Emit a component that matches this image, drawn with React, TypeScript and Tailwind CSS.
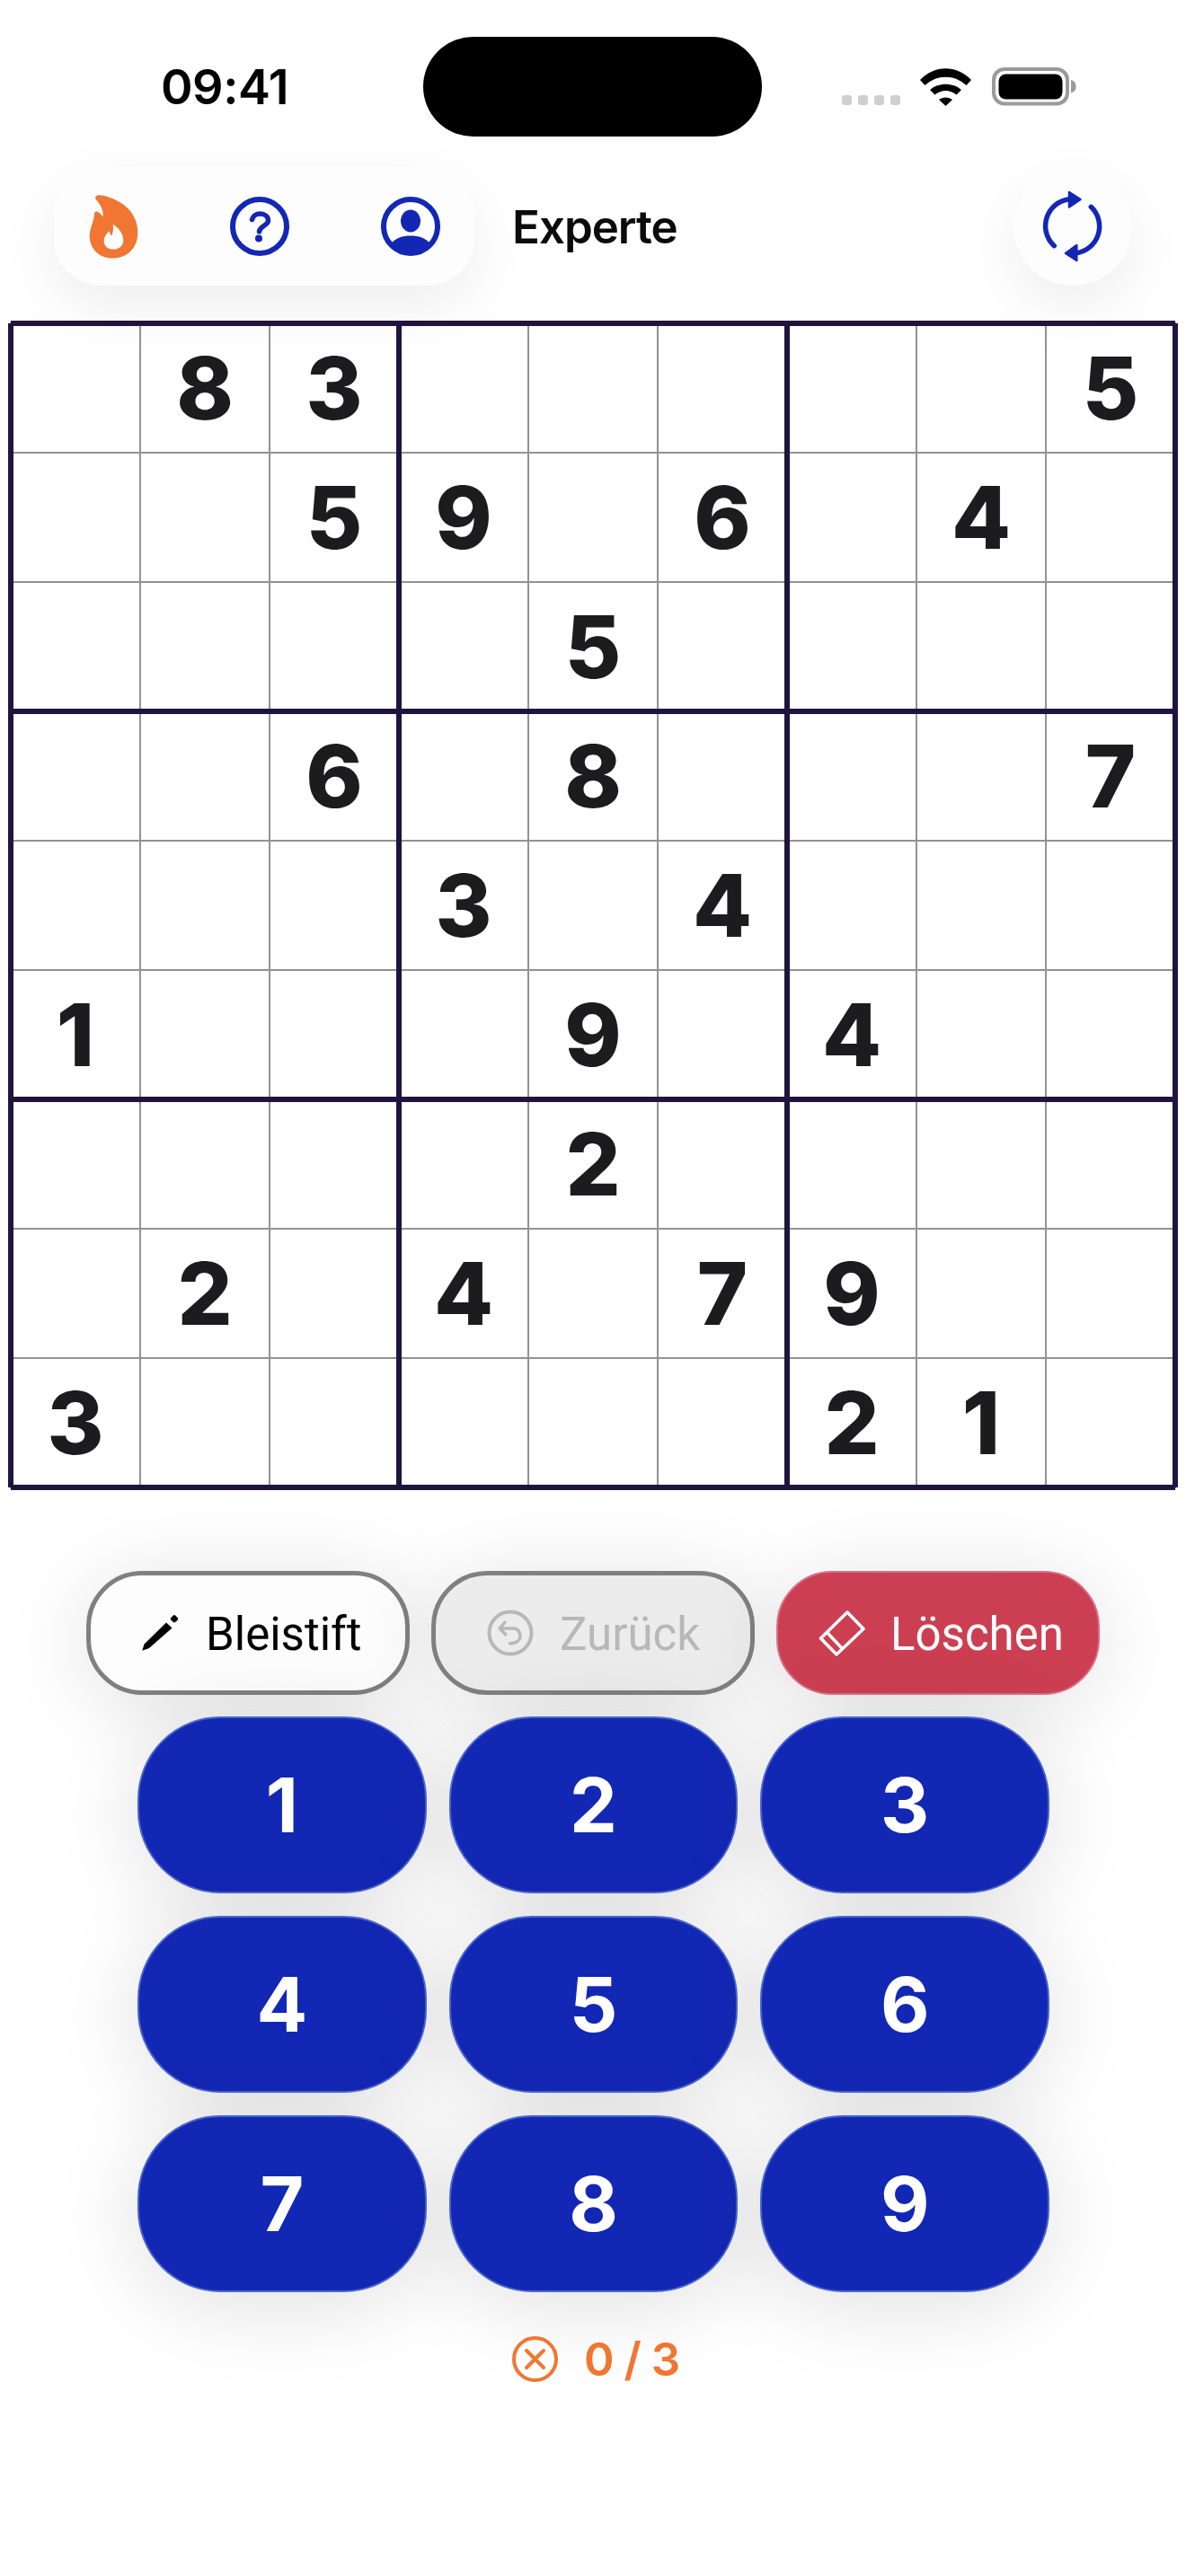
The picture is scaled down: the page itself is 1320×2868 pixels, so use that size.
const board = [
  "083000005",
  "005906040",
  "000050000",
  "006080007",
  "000304000",
  "100090400",
  "000020000",
  "020407900",
  "300000210",
];

function Flame() {
  return (
    <svg width="55" height="71" viewBox="25 35 165 212">
      <path
        fill="#F07632"
        d="M52 37 C60 33 80 38 105 47 C160 70 188 110 188 160 C188 215 150 246 105 246 C60 246 27 215 27 170 C27 150 40 125 42 105 C42 85 55 85 72 108 C75 85 60 60 48 50 C45 42 48 38 52 37 Z"
      />
      <path
        fill="#fdfdfd"
        d="M105 133 C125 145 140 165 140 185 C140 205 125 216 107 216 C88 216 75 205 75 188 C75 175 83 165 92 155 L100 172 C106 160 107 145 105 133 Z"
      />
    </svg>
  );
}

function Question() {
  return (
    <svg width="66" height="66" viewBox="0 0 66 66" fill="none">
      <circle cx="33" cy="33" r="30" stroke="#1327B5" strokeWidth="6" />
      <path
        d="M24.5 25.5 C25.5 21.5 29 19 33.5 19 C38.5 19 42.5 22 42.5 26.5 C42.5 32 33 32.5 32.5 39"
        stroke="#1327B5"
        strokeWidth="5.5"
        strokeLinecap="round"
      />
      <circle cx="32" cy="46.5" r="4" fill="#1327B5" />
    </svg>
  );
}

function Profile() {
  return (
    <svg width="66" height="66" viewBox="0 0 66 66" fill="none">
      <circle cx="33" cy="33" r="30" stroke="#1327B5" strokeWidth="6" />
      <ellipse cx="33" cy="27" rx="11" ry="12.5" fill="#1327B5" />
      <path
        fill="#1327B5"
        d="M11.5 52 C16 46 24 43.5 33 43.5 C42 43.5 50 46 54.5 52 C49 59 41 63.5 33 63.5 C25 63.5 17 59 11.5 52 Z"
      />
    </svg>
  );
}

function Refresh() {
  return (
    <svg width="80" height="84" viewBox="0 0 80 84" fill="none">
      <path d="M19.3 63.7 A30 30 0 0 1 36 11.8" stroke="#1327B5" strokeWidth="5.5" strokeLinecap="round" />
      <path d="M36 4 L48.5 12 L36 20.5 Z" fill="#1327B5" stroke="#1327B5" strokeWidth="2.5" strokeLinejoin="round" />
      <path d="M60.3 20.3 A30 30 0 0 1 44.3 71.7" stroke="#1327B5" strokeWidth="5.5" strokeLinecap="round" />
      <path d="M44.3 63 L32 72 L44.3 80 Z" fill="#1327B5" stroke="#1327B5" strokeWidth="2.5" strokeLinejoin="round" />
    </svg>
  );
}

function Wifi() {
  return (
    <svg width="57" height="42" viewBox="0 0 57 42" fill="#000">
      <path d="M0 13 C16 -4 41 -4 57 13 L51.5 19 C38.5 6.5 18.5 6.5 5.5 19 Z" />
      <path d="M11 24 C20 15.5 37 15.5 46 24 L40.5 29.5 C33 23.5 24 23.5 16.5 29.5 Z" />
      <path d="M21 35 C25 31.5 32 31.5 36 35 L28.5 42 Z" />
    </svg>
  );
}

function Battery() {
  return (
    <svg width="94" height="43" viewBox="0 0 94 43">
      <rect x="2" y="2" width="82" height="38.5" rx="12" fill="none" stroke="#9a9a9a" strokeWidth="4" />
      <rect x="7.5" y="7.5" width="71" height="28" rx="8" fill="#000" />
      <path d="M88 14 C92 15 93.5 18 93.5 21.5 C93.5 25 92 27 88 28.5 Z" fill="#9a9a9a" />
    </svg>
  );
}

function Pencil() {
  return (
    <svg width="40" height="40" viewBox="0 0 40 40" fill="#000">
      <path d="M0.3 39.7 L2.5 32.5 L27 8.5 L33.5 14.5 L8 37 Z" />
      <rect x="32.5" y="0.8" width="7" height="7" rx="2" transform="rotate(45 36 4.3)" />
    </svg>
  );
}

function Undo() {
  return (
    <svg width="52" height="52" viewBox="0 0 52 52" fill="none" stroke="#b8b8b8">
      <circle cx="26" cy="26" r="23.5" strokeWidth="4" />
      <path
        d="M19.9 14.3 L14.1 21 L20.6 27.7 M14.1 21 H30 C34 21 37 25 37 29.3 C37 34 33 37.7 25.6 37.7"
        strokeWidth="3.5"
        strokeLinecap="round"
        strokeLinejoin="round"
      />
    </svg>
  );
}

function Eraser() {
  return (
    <svg width="52" height="52" viewBox="0 0 52 52" fill="none" stroke="#fff" strokeWidth="3.5" strokeLinejoin="round" strokeLinecap="round">
      <path d="M32 3 L50 21.5 L20 50 L2.5 32 Z" />
      <path d="M9.5 25.5 L26 43" />
    </svg>
  );
}

function Miss() {
  return (
    <svg width="51" height="51" viewBox="0 0 51 51" fill="none" stroke="#F07632">
      <circle cx="25.5" cy="25.5" r="23.5" strokeWidth="4" />
      <path d="M16 16 L35 35 M35 16 L16 35" strokeWidth="4" strokeLinecap="round" />
    </svg>
  );
}

function Tool({ icon, label, className, text }: { icon: React.ReactNode; label: string; className: string; text: string }) {
  return (
    <button className={`w-[360px] h-[138px] rounded-[62px] flex items-center justify-start shadow-[0_12px_100px_rgba(0,0,0,0.12)] ${className}`}>
      {icon}
      <span className={`mt-[2px] text-[51px] leading-none font-['Roboto',sans-serif] ${text}`}>{label}</span>
    </button>
  );
}

export default function App() {
  return (
    <div className="w-[1320px] h-[2868px] bg-white overflow-hidden flex flex-col font-['Inter',sans-serif]">
      <div className="h-[186px] pt-[41px] flex items-start shrink-0">
        <div className="w-[471px] h-[111px] pl-[179px] flex items-center">
          <span className="text-[54px] leading-none font-semibold text-black tracking-[-0.5px]">09:41</span>
        </div>
        <div className="w-[377px] h-[111px] rounded-[56px] bg-black" />
        <div className="ml-[89px] mt-[34px] flex items-end">
          <div className="flex gap-[7px] mb-[1px]">
            <span className="w-[11px] h-[11px] rounded-[3px] bg-[#cfcfcf]" />
            <span className="w-[11px] h-[11px] rounded-[3px] bg-[#cfcfcf]" />
            <span className="w-[11px] h-[11px] rounded-[3px] bg-[#cfcfcf]" />
            <span className="w-[11px] h-[11px] rounded-[3px] bg-[#cfcfcf]" />
          </div>
          <div className="ml-[22px]"><Wifi /></div>
          <div className="ml-[23px]"><Battery /></div>
        </div>
      </div>

      <div className="h-[132px] px-[60px] flex items-center shrink-0">
        <div className="w-[468px] h-[132px] rounded-[52px] bg-[#fdfdfd] flex items-center justify-center gap-[102px] shadow-[0_24px_70px_rgba(0,0,0,0.07)]">
          <Flame />
          <Question />
          <Profile />
        </div>
        <span className="ml-[42px] text-[51px] leading-none font-semibold text-[#0b0b0b] tracking-[-1px]">Experte</span>
        <div className="ml-auto w-[132px] h-[132px] rounded-full bg-[#fdfdfd] flex items-center justify-center shadow-[0_24px_70px_rgba(0,0,0,0.07)]">
          <Refresh />
        </div>
      </div>

      <div className="relative mt-[42px] ml-[12px] w-[1296px] h-[1296px] grid grid-cols-9 grid-rows-9 shrink-0">
        {board.flatMap((row, r) =>
          row.split("").map((d, c) => (
            <div
              key={`${r}-${c}`}
              className="flex items-center justify-center outline-2 outline-[#929292] outline-offset-[-1px] text-[96px] leading-none font-extrabold text-[#1c1c1e]"
            >
              {d === "0" ? "" : d}
            </div>
          ))
        )}
        <div className="absolute left-[-3px] top-0 w-[1302px] h-[1296px] flex justify-between">
          <span className="w-[6px] h-full bg-[#20143f]" />
          <span className="w-[6px] h-full bg-[#20143f]" />
          <span className="w-[6px] h-full bg-[#20143f]" />
          <span className="w-[6px] h-full bg-[#20143f]" />
        </div>
        <div className="absolute left-0 top-[-3px] w-[1296px] h-[1302px] flex flex-col justify-between">
          <span className="h-[6px] w-full bg-[#20143f]" />
          <span className="h-[6px] w-full bg-[#20143f]" />
          <span className="h-[6px] w-full bg-[#20143f]" />
          <span className="h-[6px] w-full bg-[#20143f]" />
        </div>
      </div>

      <div className="mt-[93px] flex justify-center gap-[24px] shrink-0">
        <Tool
          className="bg-[#fdfdfd] border-[5px] border-[#808080] pl-[57px] gap-[31px]"
          icon={<Pencil />}
          label="Bleistift"
          text="text-black"
        />
        <Tool
          className="bg-[#ececec] border-[5px] border-[#808080] pl-[57px] gap-[29px]"
          icon={<Undo />}
          label="Zurück"
          text="text-[#b8b8b8]"
        />
        <Tool
          className="bg-[#cc3f52] border-2 border-[#dc6e84] pl-[45px] gap-[28px]"
          icon={<Eraser />}
          label="Löschen"
          text="text-white"
        />
      </div>

      <div className="mt-[24px] ml-[153px] w-[1015px] grid grid-cols-3 gap-[25px] shrink-0">
        {[1, 2, 3, 4, 5, 6, 7, 8, 9].map((n) => (
          <button
            key={n}
            className="h-[197px] rounded-[92px] bg-[#1327b5] border-2 border-[#4a66cc] flex items-center justify-center text-[84px] leading-none font-bold text-white shadow-[0_12px_100px_rgba(0,0,0,0.13)]"
          >
            {n}
          </button>
        ))}
      </div>

      <div className="mt-[49px] pl-[570px] flex items-center gap-[29px] shrink-0">
        <Miss />
        <span className="text-[51px] leading-none font-semibold text-[#F07632] tracking-[-1px]">0 / 3</span>
      </div>
    </div>
  );
}
